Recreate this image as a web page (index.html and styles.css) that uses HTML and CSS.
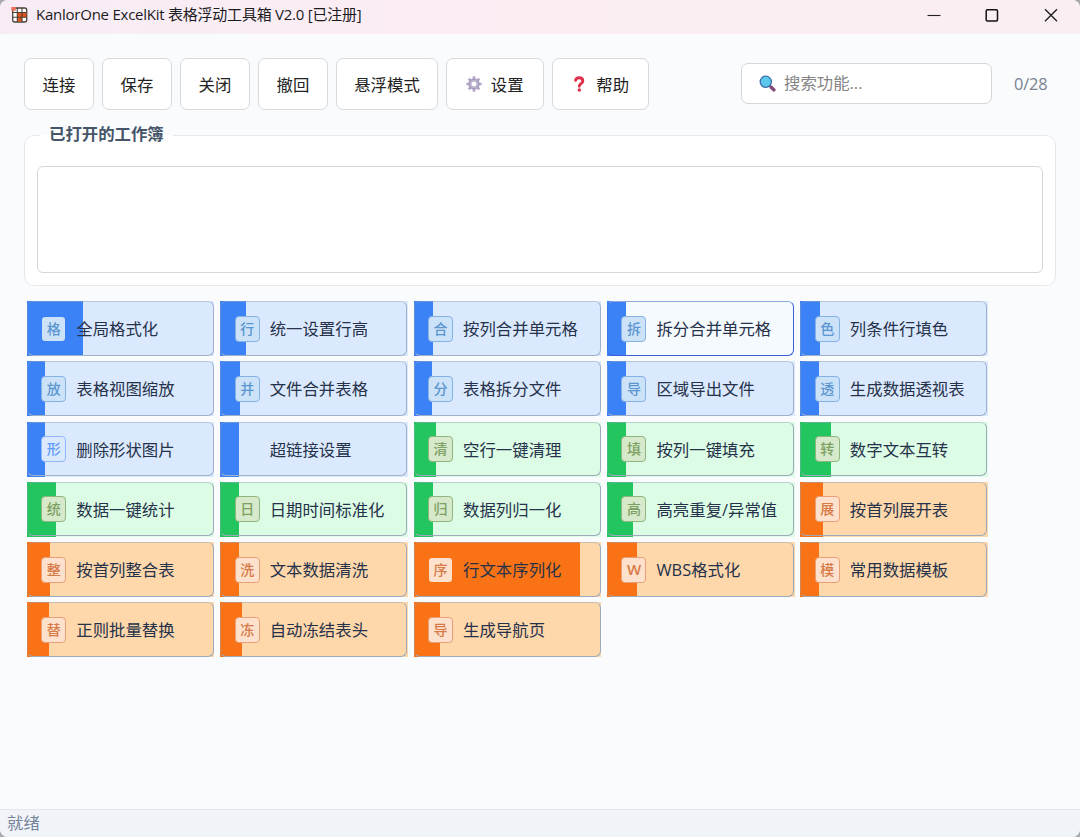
FILE: index.html
```html
<!DOCTYPE html>
<html lang="zh-CN">
<head>
  <meta charset="UTF-8">
  <meta name="viewport" content="width=device-width, initial-scale=1.0">
  <title>KanlorOne ExcelKit 表格浮动工具箱 V2.0</title>
  <link rel="stylesheet" href="styles.css">
</head>
<body>
  <!-- Window title bar -->
  <header class="titlebar">
    <svg class="app-icon" width="17" height="16" viewBox="0 0 17 16" aria-hidden="true">
      <rect x="1.7" y="1" width="14" height="14" rx="2" fill="#fff" stroke="#4a4038" stroke-width="1.3"/>
      <path d="M6.3 5.500h9v4.700h-9zM6.300 10h4.700v4.500H6.300z" fill="#e0531c"/>
      <path d="M6.3 1v14M11 1v14M2 5.5h13.5M2 10.2h13.5" stroke="#4a4038" stroke-width="1.1"/>
      <path d="M.3 0h4.500v3.800H.3z" fill="#e8705c"/>
    </svg>
    <h1>KanlorOne ExcelKit 表格浮动工具箱 V2.0 [已注册]</h1>
    <div class="window-controls">
      <svg width="14" height="14" viewBox="0 0 14 14"><path d="M.5 7.5h13" stroke="#222" stroke-width="1.1"/></svg>
      <svg width="14" height="14" viewBox="0 0 14 14"><rect x="1.2" y="1.7" width="11.3" height="11.3" rx="1.2" fill="none" stroke="#111" stroke-width="1.5"/></svg>
      <svg width="14" height="14" viewBox="0 0 14 14"><path d="M1 1.3l12 12M13 1.3l-12 12" stroke="#222" stroke-width="1.4"/></svg>
    </div>
  </header>

  <main>
    <!-- Main actions and search -->
    <nav class="toolbar">
      <button>连接</button>
      <button>保存</button>
      <button>关闭</button>
      <button>撤回</button>
      <button class="wide">悬浮模式</button>
      <button class="with-icon">
        <svg width="16" height="16" viewBox="0 0 16 16" aria-hidden="true">
          <path d="M8 .3v15.4M.3 8h15.4M2.6 2.6l10.8 10.8M13.4 2.6L2.6 13.4" stroke="#b3a9c6" stroke-width="2.7"/>
          <circle cx="8" cy="8" r="5.7" fill="#a99ebe"/>
          <circle cx="8" cy="8" r="3.9" fill="#c3bad2"/>
          <circle cx="8" cy="8" r="2.3" fill="#fff"/>
        </svg>
        设置
      </button>
      <button class="with-icon">
        <svg width="16" height="16" viewBox="0 0 16 16" aria-hidden="true">
          <path d="M4.6 4.3C5 2.6 6.3 1.8 8.1 1.8c2.2 0 3.7 1.2 3.7 3.1 0 2.7-3.5 2.7-3.5 5.3" fill="none" stroke="#df2f4a" stroke-width="2.9" stroke-linecap="round"/>
          <circle cx="8.3" cy="14" r="1.7" fill="#df2f4a"/>
        </svg>
        帮助
      </button>
      <label class="search">
        <svg width="17" height="17" viewBox="0 0 17 17" aria-hidden="true">
          <path d="M10.5 10.5l1.5 1.500" stroke="#4a5f8f" stroke-width="2"/>
          <path d="M12.2 12.2l2.700 2.700" stroke="#804878" stroke-width="3.400" stroke-linecap="round"/>
          <circle cx="6.8" cy="6.8" r="5.6" fill="#5cc8ec" stroke="#3b6fa8" stroke-width="1.3"/>
        </svg>
        <input type="text" placeholder="搜索功能...">
      </label>
      <span class="count">0/28</span>
    </nav>

    <!-- Open workbooks -->
    <fieldset class="workbooks">
      <legend>已打开的工作簿</legend>
      <div class="workbook-list"></div>
    </fieldset>

    <!-- Function tiles, the bar shows how often each one is used -->
    <section class="tiles">
      <div class="tile blue"><i class="bar" style="width: 30%"></i><b class="badge no-edge">格</b><span>全局格式化</span></div>
      <div class="tile blue"><i class="bar" style="width: 13.8%"></i><b class="badge">行</b><span>统一设置行高</span></div>
      <div class="tile blue"><i class="bar" style="width: 10.4%"></i><b class="badge">合</b><span>按列合并单元格</span></div>
      <div class="tile blue active"><i class="bar" style="width: 10.4%"></i><b class="badge">拆</b><span>拆分合并单元格</span></div>
      <div class="tile blue"><i class="bar" style="width: 10.4%"></i><b class="badge">色</b><span>列条件行填色</span></div>

      <div class="tile blue"><i class="bar" style="width: 9.7%"></i><b class="badge">放</b><span>表格视图缩放</span></div>
      <div class="tile blue"><i class="bar" style="width: 10.4%"></i><b class="badge">并</b><span>文件合并表格</span></div>
      <div class="tile blue"><i class="bar" style="width: 9.8%"></i><b class="badge">分</b><span>表格拆分文件</span></div>
      <div class="tile blue"><i class="bar" style="width: 10.4%"></i><b class="badge">导</b><span>区域导出文件</span></div>
      <div class="tile blue"><i class="bar" style="width: 9.8%"></i><b class="badge">透</b><span>生成数据透视表</span></div>

      <div class="tile blue"><i class="bar" style="width: 9.7%"></i><b class="badge light">形</b><span>删除形状图片</span></div>
      <div class="tile blue"><i class="bar" style="width: 9.8%"></i><b class="badge empty"></b><span>超链接设置</span></div>
      <div class="tile green"><i class="bar" style="width: 11.7%"></i><b class="badge">清</b><span>空行一键清理</span></div>
      <div class="tile green"><i class="bar" style="width: 10.4%"></i><b class="badge">填</b><span>按列一键填充</span></div>
      <div class="tile green"><i class="bar" style="width: 16.5%"></i><b class="badge">转</b><span>数字文本互转</span></div>

      <div class="tile green"><i class="bar" style="width: 15.7%"></i><b class="badge">统</b><span>数据一键统计</span></div>
      <div class="tile green"><i class="bar" style="width: 9.8%"></i><b class="badge">日</b><span>日期时间标准化</span></div>
      <div class="tile green"><i class="bar" style="width: 10.4%"></i><b class="badge">归</b><span>数据列归一化</span></div>
      <div class="tile green"><i class="bar" style="width: 13.8%"></i><b class="badge">高</b><span>高亮重复/异常值</span></div>
      <div class="tile orange"><i class="bar" style="width: 11.9%"></i><b class="badge">展</b><span>按首列展开表</span></div>

      <div class="tile orange"><i class="bar" style="width: 12.3%"></i><b class="badge">整</b><span>按首列整合表</span></div>
      <div class="tile orange"><i class="bar" style="width: 9.8%"></i><b class="badge">洗</b><span>文本数据清洗</span></div>
      <div class="tile orange"><i class="bar" style="width: 88.8%"></i><b class="badge no-edge">序</b><span>行文本序列化</span></div>
      <div class="tile orange"><i class="bar" style="width: 15.8%"></i><b class="badge latin">W</b><span>WBS格式化</span></div>
      <div class="tile orange"><i class="bar" style="width: 9.8%"></i><b class="badge">模</b><span>常用数据模板</span></div>

      <div class="tile orange"><i class="bar" style="width: 11.8%"></i><b class="badge">替</b><span>正则批量替换</span></div>
      <div class="tile orange"><i class="bar" style="width: 11.7%"></i><b class="badge">冻</b><span>自动冻结表头</span></div>
      <div class="tile orange"><i class="bar" style="width: 13.9%"></i><b class="badge">导</b><span>生成导航页</span></div>
    </section>
  </main>

  <footer class="statusbar">就绪</footer>
</body>
</html>
```
FILE: styles.css
```css
* {
  box-sizing: border-box;
}

html {
  background: #a9a9ad;
}

body {
  margin: 0;
  height: 837px;
  display: flex;
  flex-direction: column;
  overflow: hidden;
  border-radius: 8px;
  background: #f9fbfd;
  color: #1f2937;
  font-family: "Open Sans", "Noto Sans CJK SC", sans-serif;
  font-size: 16.4px;
}

/* Title bar */
.titlebar {
  display: flex;
  align-items: center;
  height: 34px;
  padding: 0 22px 5px 11px;
  background: linear-gradient(90deg, #f7ecf6, #fbedf3 40%, #f9eef1);
}

.app-icon {
  margin-right: 8px;
}

h1 {
  margin: 0;
  padding-bottom: 2px;
  font-size: 15px;
  font-weight: 400;
  letter-spacing: -0.24px;
  color: #1b1b1b;
}

.window-controls {
  display: flex;
  gap: 44.5px;
  margin-left: auto;
}

.window-controls svg:nth-child(2) {
  margin: 0 1px 0 -1px;
}

main {
  flex: 1;
  padding: 24px 24px 0;
}

/* Toolbar */
.toolbar {
  display: flex;
  align-items: center;
  gap: 8px;
  height: 52px;
}

button {
  display: flex;
  align-items: center;
  justify-content: center;
  width: 70px;
  height: 52px;
  padding: 0 0 1px;
  border: 1px solid #d6d9dd;
  border-radius: 7px;
  background: #fff;
  color: #222;
  font: inherit;
  white-space: nowrap;
}

button.wide {
  width: 102px;
}

button.with-icon {
  width: 97.5px;
  gap: 9px;
}

.search {
  display: flex;
  align-items: center;
  gap: 8px;
  width: 251px;
  height: 41px;
  margin: 0 14px 2px auto;
  padding-left: 17px;
  border: 1px solid #d3d6da;
  border-radius: 7px;
  background: #fff;
}

.search svg {
  flex-shrink: 0;
}

.search input {
  width: 180px;
  padding: 0 0 1px;
  border: 0;
  outline: 0;
  background: none;
  font: inherit;
}

.search input::placeholder {
  color: #858585;
}

.count {
  width: 42px;
  padding-bottom: 1px;
  color: #7a828e;
  letter-spacing: -0.2px;
}

/* Open workbooks */
.workbooks {
  height: 162px;
  margin: 14px 0 0;
  padding: 20px 12px 12px;
  border: 1px solid #e5e9ee;
  border-radius: 10px;
  background: #fff;
}

.workbooks legend {
  height: 22px;
  margin-left: 3px;
  padding: 0 9px;
  color: #475569;
  font-weight: 700;
  line-height: 20px;
}

.workbook-list {
  height: 107px;
  border: 1px solid #d3d6da;
  border-radius: 6px;
}

/* Function tiles */
.tiles {
  display: grid;
  grid-template-columns: repeat(5, 187.6px);
  grid-auto-rows: 55px;
  gap: 5.25px 5.8px;
  margin: 15px 0 0 2.8px;
}

.tile {
  position: relative;
  display: flex;
  align-items: center;
  padding-left: 14.5px;
  color: #26324a;
}

.tile::after {
  content: "";
  position: absolute;
  inset: 0 0.5px 0.5px 0;
  border: 1px solid #9fb0cb;
  border-top-color: rgba(148, 163, 184, 0.5);
  border-left-color: rgba(148, 163, 184, 0.4);
  border-radius: 6px;
}

.tile span {
  position: relative;
  padding-bottom: 1px;
  white-space: nowrap;
}

.bar {
  position: absolute;
  top: 0;
  bottom: 0;
  left: 0;
}

.badge {
  position: relative;
  width: 25px;
  height: 26px;
  margin-right: 10px;
  border: 1px solid;
  border-radius: 4px;
  font-size: 14px;
  font-weight: 500;
  line-height: 23px;
  text-align: center;
}

.blue {
  background: #dbe9fe;
}

.blue .bar {
  background: #3b82f6;
}

.blue .badge {
  border-color: #84b2e2;
  background: #cce2f8;
  color: #5c96d0;
}

.blue .badge.light {
  border-color: #8fb8fa;
  background: #dbe9fe;
  color: #5f9bf7;
}

.badge.empty {
  visibility: hidden;
}

.badge.latin {
  font-size: 15px;
  font-weight: 600;
}

.badge.no-edge {
  border-color: transparent !important;
  background-clip: padding-box !important;
}

.active {
  background: #f5faff;
}

.active::after {
  border-color: #3a5fd9;
  border-top-color: #8fa9e0;
  border-left-color: #3f74dd;
}

.green {
  background: #dcfce5;
}

.green .bar {
  background: #22c55e;
}

.green .badge {
  border-color: #8fb67f;
  background: #d6eacb;
  color: #7da062;
}

.orange {
  background: #fed7aa;
}

.orange .bar {
  background: #f97316;
}

.orange .badge {
  border-color: #e9a078;
  background: #fde1cc;
  color: #d67a48;
}

.green::after,
.orange::after {
  border-right-color: #9daabb;
  border-bottom-color: #9daabb;
}

/* Status bar */
.statusbar {
  height: 28px;
  padding-left: 7px;
  border-top: 1px solid #e3e7ec;
  background: #f0f4f9;
  color: #75839a;
  line-height: 25px;
}
```
